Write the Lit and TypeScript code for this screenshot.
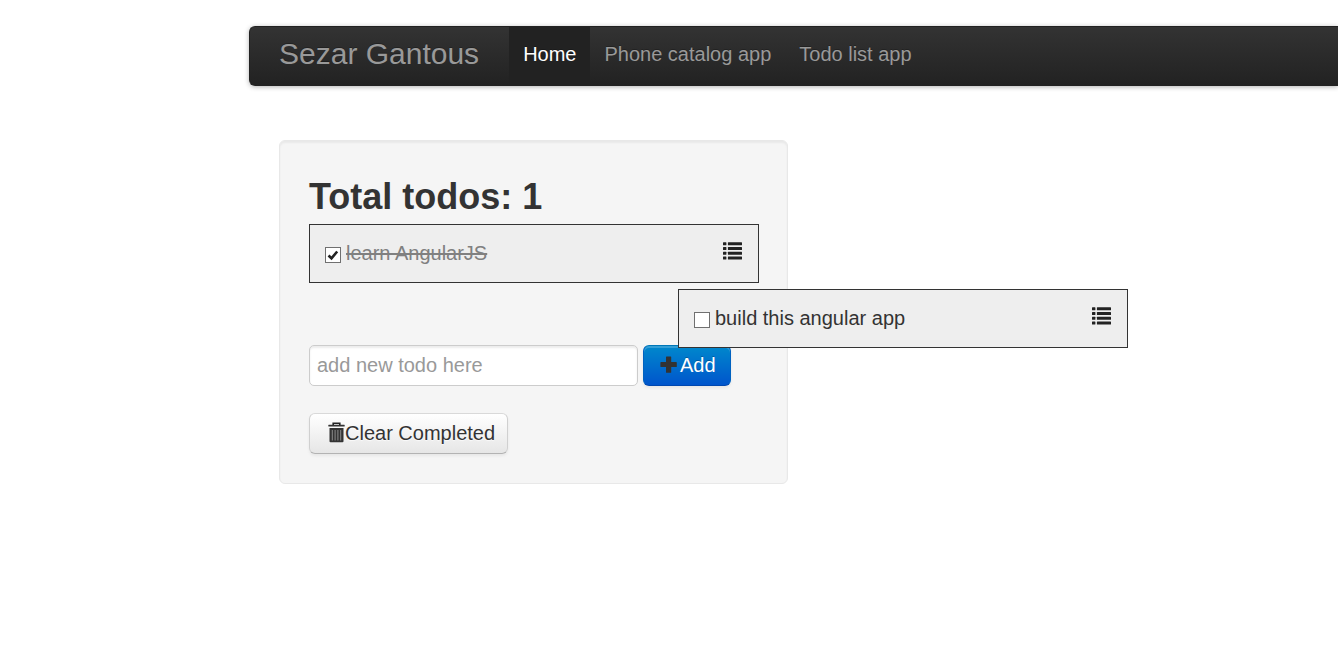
import { LitElement, html, css, svg } from "lit";
import { customElement, state } from "lit/decorators.js";
import { classMap } from "lit/directives/class-map.js";
import { styleMap } from "lit/directives/style-map.js";

interface Todo {
  id: number;
  text: string;
  done: boolean;
  x: number;
  y: number;
}

const listIcon = html`<svg width="20" height="18" viewBox="0 0 20 18" aria-hidden="true">
  ${[0, 4.7, 9.4, 14.1].map(
    (y) => svg`<rect x="0" y=${y + 0.3} width="3.4" height="3" rx="0.5" fill="#222"/>
      <rect x="4.9" y=${y + 0.3} width="14.1" height="3" rx="0.5" fill="#222"/>`
  )}
</svg>`;

const plusIcon = html`<svg width="17" height="18" viewBox="0 0 17 18" aria-hidden="true">
  <path
    d="M6.6 0.5h4a.6.6 0 0 1 .6.6v5h5a.6.6 0 0 1 .6.6v3.8a.6.6 0 0 1-.6.6h-5v5.1a.6.6 0 0 1-.6.6h-4a.6.6 0 0 1-.6-.6v-5.1H1a.6.6 0 0 1-.6-.6V6.700a.6.6 0 0 1 .6-.6h5v-5a.6.6 0 0 1 .6-.6z"
    fill="#333"
  />
</svg>`;

const trashIcon = html`<svg width="17" height="21" viewBox="0 0 17 21" aria-hidden="true">
  <path d="M5.200 3V1.300h6.600V3" fill="none" stroke="#222" stroke-width="1.600" />
  <rect x="0.300" y="2.700" width="16.400" height="1.900" rx="0.500" fill="#333" />
  <path d="M1.500 6h14v13.200a1 1 0 0 1-1 1h-12a1 1 0 0 1-1-1z" fill="#333" />
  <path d="M4.300 8v10.500M7.100 8v10.500M9.900 8v10.500M12.700 8v10.500" stroke="#8a8a8a" stroke-width="1" />
</svg>`;

@customElement("app-root")
export class AppRoot extends LitElement {
  static styles = css`
    :host {
      display: block;
      padding: 26px 0 30px 249px;
      font-family: "Liberation Sans", Arial, sans-serif;
      font-size: 20px;
      line-height: 30px;
      color: #333;
    }
    * {
      box-sizing: border-box;
    }
    .navbar {
      display: flex;
      height: 60px;
      border: 1px solid #222;
      border-right: 0;
      border-radius: 6px 0 0 6px;
      background: linear-gradient(#333, #222);
      box-shadow: 0 1px 5px rgba(0, 0, 0, 0.3);
      white-space: nowrap;
    }
    .navbar a {
      color: #999;
      text-decoration: none;
      text-shadow: 0 -1px 0 rgba(0, 0, 0, 0.25);
    }
    .navbar .brand {
      padding: 12px 30px 16px 29px;
      font-size: 30px;
    }
    .links {
      display: flex;
      margin: 0;
      padding: 0;
      list-style: none;
    }
    .link {
      display: block;
      height: 100%;
      padding: 12px 14px 16px;
    }
    .navbar .active {
      color: #fff;
      background: #222;
    }
    .well {
      width: 509px;
      margin: 54px 0 0 30px;
      padding: 29px 28px 29px 29px;
      border: 1px solid #e8e8e8;
      border-radius: 6px;
      background: #f5f5f5;
      box-shadow: inset 0 2px 2px rgba(0, 0, 0, 0.05);
    }
    h1 {
      margin: 0;
      font-size: 36px;
      line-height: 54px;
    }
    .todos {
      margin: 0;
      padding: 0;
      list-style: none;
    }
    .todo {
      display: flex;
      align-items: center;
      padding: 13px 15px 14px;
      border: 1px solid #333;
      background: #eee;
    }
    .dragged {
      position: relative;
      z-index: 1;
    }
    .todo label {
      flex: 1;
      display: flex;
      align-items: center;
      gap: 5px;
    }
    .todo svg {
      margin-bottom: 4px;
    }
    .done .text {
      color: #808080;
      text-decoration: line-through;
    }
    .check {
      appearance: none;
      width: 16px;
      height: 16px;
      margin: 4px 0 0;
      border: 1px solid #707070;
      background: #fff;
    }
    .check:checked {
      background: #fff
        url("data:image/svg+xml,%3Csvg xmlns='http://www.w3.org/2000/svg' viewBox='0 0 14 14'%3E%3Cpath d='M2.500 7.500L5.500 10.300L11.200 3.500' fill='none' stroke='%23222' stroke-width='2.600'/%3E%3C/svg%3E");
    }
    .entry {
      display: flex;
      gap: 5px;
      margin: 3px 0 27px;
    }
    .field {
      width: 329px;
      height: 41px;
      padding: 5px 7px;
      border: 1px solid #ccc;
      border-radius: 5px;
      background: #fff;
      box-shadow: inset 0 2px 2px rgba(0, 0, 0, 0.075);
      font: inherit;
      color: #555;
    }
    .field::placeholder {
      color: #999;
      opacity: 1;
    }
    .btn {
      display: flex;
      align-items: center;
      height: 41px;
      padding: 0 12px 2px 18px;
      border: 1px solid #ccc;
      border-color: #d9d9d9 #d0d0d0 #b3b3b3;
      border-radius: 6px;
      background: linear-gradient(#fff, #e6e6e6);
      box-shadow: inset 0 1px 0 rgba(255, 255, 255, 0.2), 0 2px 3px rgba(0, 0, 0, 0.06);
      font: inherit;
      color: #333;
      text-shadow: 0 1px 1px rgba(255, 255, 255, 0.75);
    }
    .primary {
      gap: 3px;
      padding: 0 14px 2px 16px;
      border-color: #0077b8 #0062c0 #0048b0;
      background: linear-gradient(#08c, #05c);
      box-shadow: inset 0 2px 0 rgba(255, 255, 255, 0.2), 0 2px 3px rgba(0, 0, 0, 0.06);
      color: #fff;
      text-shadow: 0 -1px 0 rgba(0, 0, 0, 0.25);
    }
  `;

  @state() private todos: Todo[] = [
    { id: 1, text: "learn AngularJS", done: true, x: 0, y: 0 },
    { id: 2, text: "build this angular app", done: false, x: 369, y: 6 },
  ];

  private toggle(id: number) {
    this.todos = this.todos.map((t) => (t.id === id ? { ...t, done: !t.done } : t));
  }

  private clearCompleted() {
    this.todos = this.todos.filter((t) => !t.done);
  }

  private add(e: Event) {
    e.preventDefault();
    const field = this.renderRoot.querySelector<HTMLInputElement>(".field")!;
    if (!field.value) return;
    this.todos = [...this.todos, { id: Date.now(), text: field.value, done: false, x: 0, y: 0 }];
    field.value = "";
  }

  private renderTodo(t: Todo) {
    const dragged = t.x !== 0 || t.y !== 0;
    return html`<li
      class=${classMap({ todo: true, done: t.done, dragged })}
      style=${styleMap(dragged ? { left: `${t.x}px`, top: `${t.y}px` } : {})}
    >
      <label>
        <input class="check" type="checkbox" .checked=${t.done} @change=${() => this.toggle(t.id)} />
        <span class="text">${t.text}</span>
      </label>
      ${listIcon}
    </li>`;
  }

  render() {
    return html`
      <nav class="navbar">
        <a class="brand" href="#">Sezar Gantous</a>
        <ul class="links">
          <li><a class="link active" href="#">Home</a></li>
          <li><a class="link" href="#phones">Phone catalog app</a></li>
          <li><a class="link" href="#todos">Todo list app</a></li>
        </ul>
      </nav>
      <main class="well">
        <h1>Total todos: ${this.todos.filter((t) => !t.done).length}</h1>
        <ul class="todos">
          ${this.todos.map((t) => this.renderTodo(t))}
        </ul>
        <form class="entry" @submit=${this.add}>
          <input class="field" type="text" aria-label="New todo" placeholder="add new todo here" />
          <button class="btn primary" type="submit">${plusIcon}<span>Add</span></button>
        </form>
        <button class="btn" type="button" @click=${this.clearCompleted}>
          ${trashIcon}<span>Clear Completed</span>
        </button>
      </main>
    `;
  }
}
